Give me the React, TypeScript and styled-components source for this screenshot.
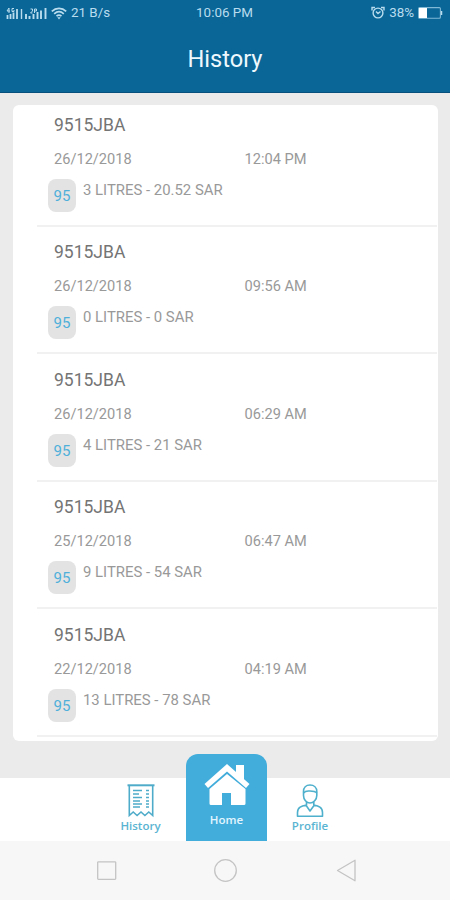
import React from "react";
import styled, { createGlobalStyle } from "styled-components";

const GlobalStyle = createGlobalStyle`
  * { box-sizing: border-box; }
  body { margin: 0; background: #ebebeb; font-family: Roboto, "Liberation Sans", sans-serif; }
`;

const Screen = styled.div`
  width: 450px;
  height: 900px;
  display: flex;
  flex-direction: column;
  background: #ebebeb;
  overflow: hidden;
`;

const Header = styled.header`
  height: 93px;
  flex: none;
  background: #0a6697;
  border-bottom: 1px solid #07507d;
`;

const StatusBar = styled.div`
  height: 26px;
  padding: 0 7px 0 6px;
  display: grid;
  grid-template-columns: 1fr auto 1fr;
  align-items: center;
  color: #b9dcee;
  font-size: 13.4px;
  line-height: 26px;
`;

const StatusGroup = styled.div<{ $end?: boolean }>`
  display: flex;
  align-items: center;
  gap: 4px;
  justify-content: ${(p) => (p.$end ? "flex-end" : "flex-start")};
`;

const Title = styled.h1`
  margin: 18px 0 0;
  text-align: center;
  color: #eef8fd;
  font-size: 23.6px;
  line-height: 30px;
  font-weight: 400;
`;

const Card = styled.main`
  height: 636px;
  margin: 12px 12px 0 13px;
  flex: none;
  background: #fff;
  border-radius: 6px;
  overflow: hidden;
`;

const List = styled.ul`
  list-style: none;
  margin: -6px 1px 0 24px;
  padding: 0;
`;

const Row = styled.li`
  height: 127.5px;
  padding: 15.5px 0 0 17px;
  border-bottom: 2px solid #f1f1f1;
`;

const Plate = styled.div`
  font-size: 17.5px;
  line-height: 20px;
  color: #747474;
`;

const When = styled.div`
  display: grid;
  grid-template-columns: 190.5px 1fr;
  margin-top: 15px;
  font-size: 14.6px;
  line-height: 18px;
  color: #999;
`;

const Fill = styled.div`
  display: flex;
  margin: 11px 0 0 -6px;
  gap: 7px;
  font-size: 14.9px;
  line-height: 23px;
  color: #999;
`;

const Grade = styled.span`
  width: 28px;
  height: 33px;
  border-radius: 8px;
  background: #e3e3e3;
  color: #4fb0da;
  font-size: 15px;
  line-height: 35px;
  text-align: center;
`;

const Tabs = styled.nav`
  height: 87px;
  margin-top: 13px;
  flex: none;
  display: grid;
  grid-template-columns: 95px 91px 81px 86px 97px;
  align-items: end;
  background: linear-gradient(#ebebeb 0 24px, #fff 24px);
`;

const Tab = styled.a<{ $active?: boolean }>`
  height: ${(p) => (p.$active ? "87px" : "63px")};
  padding-top: ${(p) => (p.$active ? "10px" : "5px")};
  display: flex;
  flex-direction: column;
  align-items: center;
  gap: ${(p) => (p.$active ? "5px" : "0")};
  background: ${(p) => (p.$active ? "#42addb" : "transparent")};
  border-radius: ${(p) => (p.$active ? "12px 12px 0 0" : "0")};
  color: ${(p) => (p.$active ? "#e3f6ff" : "#5ab4d2")};
  font-family: "Open Sans", sans-serif;
  font-weight: 600;
  font-size: 11.5px;
  line-height: 16px;
`;

const TabSpacer = styled.span``;

const SystemNav = styled.footer`
  flex: 1;
  padding: 0 94px 0 96px;
  display: grid;
  grid-template-columns: 21px 1fr 21px;
  justify-items: center;
  align-items: center;
  background: #f7f7f7;
`;

const fills = [
  { date: "26/12/2018", time: "12:04 PM", text: "3 LITRES - 20.52 SAR" },
  { date: "26/12/2018", time: "09:56 AM", text: "0 LITRES - 0 SAR" },
  { date: "26/12/2018", time: "06:29 AM", text: "4 LITRES - 21 SAR" },
  { date: "25/12/2018", time: "06:47 AM", text: "9 LITRES - 54 SAR" },
  { date: "22/12/2018", time: "04:19 AM", text: "13 LITRES - 78 SAR" },
];

const SignalIcon = () => (
  <svg width="41" height="13" viewBox="0 0 41 13" fill="none" stroke="currentColor">
    <path d="M1.500 8v4M4.500 7v5M7.500 5.500v6.500M11 2v10" strokeWidth="1.800" />
    <path d="M3 1L1 4h3M3 1v5M8 1.500H6v3h2V3" strokeWidth="1" />
    <path d="M15.500 2v10" strokeWidth="1.400" />
    <path d="M20 7v5M23.500 9v3M27.500 7v5M31.500 5v7M35 3.500v8.500M39.500 1v11" strokeWidth="1.900" />
    <path d="M24.500 2h2v2l-2 2h2M28.500 6V2h2v2h-2" strokeWidth="1" />
  </svg>
);

const WifiIcon = () => (
  <svg width="16" height="13" viewBox="0 0 16 13" fill="none" stroke="currentColor" strokeWidth="1.700">
    <path d="M.8 4.300C5 .3 11 .3 15.200 4.300M3.200 6.800c2.900-2.600 6.700-2.600 9.600 0M5.500 9.200c1.600-1.300 3.400-1.300 5 0" />
    <path d="M6.300 10.200h3.400L8 12.400z" fill="currentColor" stroke="none" />
  </svg>
);

const AlarmIcon = () => (
  <svg width="14" height="14" viewBox="0 0 14 14" fill="none" stroke="currentColor" strokeWidth="1.400">
    <circle cx="7" cy="7" r="4.900" />
    <path d="M1 4.500V1.500h3M13 4.500V1.500h-3M5 5.500l2 2 2.500-2" />
  </svg>
);

const BatteryIcon = () => (
  <svg width="25" height="12" viewBox="0 0 25 12">
    <rect x=".6" y=".6" width="21.800" height="10.600" rx="1" fill="none" stroke="#7fb9d6" strokeWidth="1.100" />
    <path d="M1 1h8v10H1z" fill="#fff" />
    <path d="M23.500 4v4" stroke="currentColor" strokeWidth="1.500" />
  </svg>
);

const ReceiptIcon = () => (
  <svg width="28" height="35" viewBox="0 0 28 35" fill="none" stroke="#4eabc9">
    <path d="M.5 2.300h27" strokeWidth="2" />
    <path d="M2.300 2v30.500l3.900-3.500 3.900 3.500 3.900-3.500 3.900 3.500 3.900-3.500 3.900 3.500V2" strokeWidth="1.600" />
    <path d="M6 7.500h9M6 11h6M6 14.500h9M6 18h7M6 21h9M6 24h7" strokeWidth="1.400" />
    <path d="M19 7.500h3M19 11h3M19 14.500h3M19 18h3M19 21h3M19 24h3" strokeWidth="1.400" />
  </svg>
);

const HomeIcon = () => (
  <svg width="46" height="43" viewBox="0 0 46 43" fill="#fff">
    <path d="M32 1h8v17l-8-7z" />
    <path d="M23 0L.5 20 4 24 23 7.500 42 24l3.500-4z" />
    <path d="M23 10L5.500 25v14.500Q5.500 41 7 41h11V29h9v12h13q1.500 0 1.500-1.500V25z" />
  </svg>
);

const ProfileIcon = () => (
  <svg width="28" height="35" viewBox="0 0 28 35" fill="none" stroke="#4eb0cc" strokeWidth="1.600" strokeLinejoin="round">
    <path d="M7.500 8.500C7.500 4.500 10 2 14 2s6.800 2.500 6.800 6.500v4c0 4-3.300 7.500-6.800 7.500s-6.500-3.500-6.500-7.500z" />
    <path d="M7.500 10c2-2.500 3-2 6.500-2s5 0 6.800 2" />
    <path d="M10.500 19v3c-5 1-9 2-9 7.500v3.700h25v-3.700c0-5.500-4-6.500-8.700-7.500v-3M10 22.300l4 5.700 4.200-5.700" />
  </svg>
);

const RecentsIcon = () => (
  <svg width="21" height="22" viewBox="0 0 21 22" fill="none" stroke="#c4c4c4" strokeWidth="1.300">
    <rect x="1.700" y="1.800" width="18" height="17.500" rx=".7" />
  </svg>
);

const CircleIcon = () => (
  <svg width="24" height="24" viewBox="0 0 24 24" fill="none" stroke="#c4c4c4" strokeWidth="1.300">
    <circle cx="11.500" cy="11.500" r="10.800" />
  </svg>
);

const BackIcon = () => (
  <svg width="21" height="24" viewBox="0 0 21 24" fill="none" stroke="#c4c4c4" strokeWidth="1.300" strokeLinejoin="round">
    <path d="M20 1.200v20.600L2.500 11.500z" />
  </svg>
);

export default function App() {
  return (
    <>
      <GlobalStyle />
      <Screen>
        <Header>
          <StatusBar>
            <StatusGroup>
              <SignalIcon />
              <WifiIcon />
              <span>21 B/s</span>
            </StatusGroup>
            <span>10:06 PM</span>
            <StatusGroup $end>
              <AlarmIcon />
              <span>38%</span>
              <BatteryIcon />
            </StatusGroup>
          </StatusBar>
          <Title>History</Title>
        </Header>
        <Card>
          <List>
            {fills.map((f) => (
              <Row key={f.time}>
                <Plate>9515JBA</Plate>
                <When>
                  <span>{f.date}</span>
                  <span>{f.time}</span>
                </When>
                <Fill>
                  <Grade>95</Grade>
                  <span>{f.text}</span>
                </Fill>
              </Row>
            ))}
          </List>
        </Card>
        <Tabs>
          <TabSpacer />
          <Tab>
            <ReceiptIcon />
            History
          </Tab>
          <Tab $active>
            <HomeIcon />
            Home
          </Tab>
          <Tab>
            <ProfileIcon />
            Profile
          </Tab>
        </Tabs>
        <SystemNav>
          <RecentsIcon />
          <CircleIcon />
          <BackIcon />
        </SystemNav>
      </Screen>
    </>
  );
}
